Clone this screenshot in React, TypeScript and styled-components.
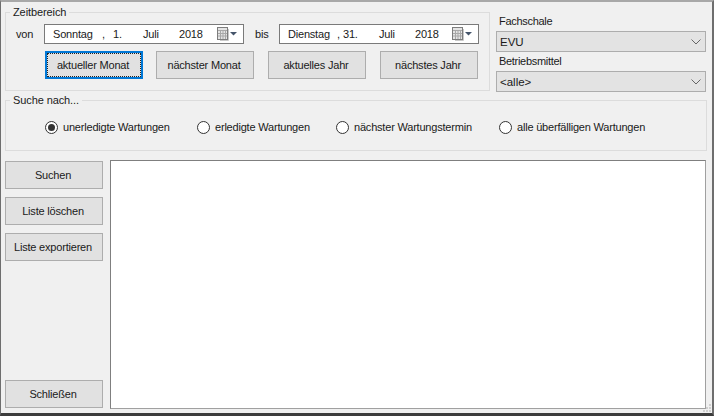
import React from "react";
import styled, { createGlobalStyle } from "styled-components";

const GlobalStyle = createGlobalStyle`
  html, body {
    margin: 0;
    padding: 0;
    background: #f0f0f0;
  }
`;

const Window = styled.div`
  box-sizing: border-box;
  position: relative;
  width: 714px;
  height: 416px;
  overflow: hidden;
  background: #f0f0f0;
  border-top: 2px solid #a8a8a8;
  border-left: 1px solid #6e6e6e;
  border-right: 2px solid #6e6e6e;
  border-bottom: 3px solid #3c3c3c;
  padding: 4px 6px 4px 4px;
  display: flex;
  flex-direction: column;
  font-family: "Liberation Sans", Arial, sans-serif;
  font-size: 11px;
  letter-spacing: -0.2px;
  color: #1a1a1a;
`;

const TopRow = styled.div`
  display: flex;
  align-items: flex-start;
  height: 85px;
`;

const Group = styled.fieldset<{ $h: number }>`
  box-sizing: border-box;
  margin: 0;
  border: 1px solid #dcdcdc;
  padding: 0;
  min-width: 0;
  height: ${(p) => p.$h}px;
  display: flex;
  flex-direction: column;
`;

const GroupTitle = styled.legend`
  margin-left: 4px;
  padding: 0 3px;
  font-size: 11px;
  line-height: 13px;
  letter-spacing: -0.1px;
`;

const RangeGroup = styled(Group)`
  width: 485px;
`;

const DateRow = styled.div`
  display: flex;
  align-items: center;
  margin-top: 5px;
  padding-left: 10px;
  height: 20px;
`;

const DateLabel = styled.span<{ $w: number; $indent?: number }>`
  box-sizing: border-box;
  width: ${(p) => p.$w}px;
  padding-left: ${(p) => p.$indent ?? 0}px;
`;

const DatePicker = styled.div`
  box-sizing: border-box;
  width: 200px;
  height: 20px;
  border: 1px solid #7a7a7a;
  background: #fff;
  display: flex;
  align-items: center;
  padding-left: 8px;
`;

const DatePart = styled.span<{ $w: number }>`
  width: ${(p) => p.$w}px;
  white-space: pre;
`;

const CalendarButton = styled.span`
  margin-left: auto;
  margin-right: 6px;
  display: flex;
`;

const ButtonRow = styled.div`
  display: flex;
  gap: 14px;
  margin-top: 7px;
  padding-left: 39px;
`;

const PushButton = styled.button<{ $focused?: boolean }>`
  box-sizing: border-box;
  width: 98px;
  height: 28px;
  padding: 0 2px 0 0;
  margin: 0;
  background: #e1e1e1;
  border: 1px solid #adadad;
  color: #1a1a1a;
  font: inherit;
  letter-spacing: inherit;
  ${(p) =>
    p.$focused
      ? `
    border: 2px solid #0078d7;
    outline: 1px dotted #222;
    outline-offset: -3px;
    margin-right: -1px;
  `
      : ""}
`;

const SideColumn = styled.div`
  width: 210px;
  margin-left: 6px;
  margin-top: 9px;
  display: flex;
  flex-direction: column;
`;

const FieldLabel = styled.label`
  box-sizing: border-box;
  line-height: 13px;
  height: 16px;
  padding-left: 3px;
  letter-spacing: -0.3px;
`;

const Combo = styled.div`
  box-sizing: border-box;
  height: 21px;
  margin-bottom: 3px;
  background: #e3e3e3;
  border: 1px solid #adadad;
  display: flex;
  align-items: center;
  justify-content: space-between;
  padding: 0 4px 0 3px;
  font-size: 11.5px;
  letter-spacing: 0;
`;

const SearchGroup = styled(Group)`
  margin-top: 3px;
  width: 702px;
`;

const RadioRow = styled.div`
  display: flex;
  align-items: center;
  height: 14px;
  margin-top: 13px;
  padding-left: 39px;
`;

const RadioOption = styled.div<{ $w: number }>`
  display: flex;
  align-items: center;
  gap: 5px;
  width: ${(p) => p.$w}px;
`;

const RadioDot = styled.span<{ $on?: boolean }>`
  box-sizing: border-box;
  width: 13px;
  height: 13px;
  border-radius: 50%;
  border: 1px solid #333;
  background: #fff;
  display: flex;
  align-items: center;
  justify-content: center;
  &::after {
    content: "";
    width: 7px;
    height: 7px;
    border-radius: 50%;
    background: ${(p) => (p.$on ? "#333" : "transparent")};
  }
`;

const BottomRow = styled.div`
  flex: 1;
  display: flex;
  gap: 7px;
  margin-top: 9px;
  min-height: 0;
`;

const ButtonColumn = styled.div`
  width: 98px;
  display: flex;
  flex-direction: column;
  gap: 8px;
  padding: 1px 0;
`;

const CloseButton = styled(PushButton)`
  margin-top: auto;
`;

const ResultList = styled.div`
  box-sizing: border-box;
  flex: 1;
  background: #fff;
  border: 1px solid #7f7f7f;
  border-right-color: #a0a0a0;
  border-bottom-color: #a0a0a0;
`;

const SizeGrip = styled.svg`
  position: absolute;
  right: 0;
  bottom: 0;
`;

const CalendarIcon = () => (
  <svg width="20" height="14" viewBox="0 0 20 14">
    <rect x="0.5" y="0.5" width="10" height="12" fill="#e4e4e4" stroke="#7d7d7d" />
    <path d="M1 3.5H10M3.5 4V12M6 4V12M8.5 4V12M1 6.5H10M1 9H10" stroke="#a8a8a8" fill="none" />
    <path d="M11.5 2V13.5H3" stroke="#c8c8c8" fill="none" />
    <path d="M13 5H20L16.5 8.5Z" fill="#44546a" />
  </svg>
);

const ChevronIcon = () => (
  <svg width="10" height="6" viewBox="0 0 10 6">
    <path d="M0.5 0.5L5 5L9.5 0.5" stroke="#666" fill="none" />
  </svg>
);

function DateField({ day, date, commaW, dateW }: { day: string; date: string; commaW: number; dateW: number }) {
  return (
    <DatePicker>
      <DatePart $w={49}>{day}</DatePart>
      <DatePart $w={commaW}>,</DatePart>
      <DatePart $w={dateW}>{date}</DatePart>
      <DatePart $w={36}>Juli</DatePart>
      <DatePart $w={30}>2018</DatePart>
      <CalendarButton>
        <CalendarIcon />
      </CalendarButton>
    </DatePicker>
  );
}

const options = [
  { label: "unerledigte Wartungen", w: 152, on: true },
  { label: "erledigte Wartungen", w: 139 },
  { label: "nächster Wartungstermin", w: 163 },
  { label: "alle überfälligen Wartungen", w: 160 },
];

export default function App() {
  return (
    <>
      <GlobalStyle />
      <Window>
        <TopRow>
          <RangeGroup $h={85}>
            <GroupTitle>Zeitbereich</GroupTitle>
            <DateRow>
              <DateLabel $w={28}>von</DateLabel>
              <DateField day="Sonntag" date="1." commaW={11} dateW={30} />
              <DateLabel $w={35} $indent={11}>
                bis
              </DateLabel>
              <DateField day="Dienstag" date="31." commaW={6} dateW={36} />
            </DateRow>
            <ButtonRow>
              <PushButton $focused>aktueller Monat</PushButton>
              <PushButton>nächster Monat</PushButton>
              <PushButton>aktuelles Jahr</PushButton>
              <PushButton>nächstes Jahr</PushButton>
            </ButtonRow>
          </RangeGroup>
          <SideColumn>
            <FieldLabel>Fachschale</FieldLabel>
            <Combo>
              EVU
              <ChevronIcon />
            </Combo>
            <FieldLabel>Betriebsmittel</FieldLabel>
            <Combo>
              {"<alle>"}
              <ChevronIcon />
            </Combo>
          </SideColumn>
        </TopRow>
        <SearchGroup $h={57}>
          <GroupTitle>Suche nach...</GroupTitle>
          <RadioRow>
            {options.map((o) => (
              <RadioOption key={o.label} $w={o.w}>
                <RadioDot $on={o.on} />
                {o.label}
              </RadioOption>
            ))}
          </RadioRow>
        </SearchGroup>
        <BottomRow>
          <ButtonColumn>
            <PushButton>Suchen</PushButton>
            <PushButton>Liste löschen</PushButton>
            <PushButton>Liste exportieren</PushButton>
            <CloseButton>Schließen</CloseButton>
          </ButtonColumn>
          <ResultList />
        </BottomRow>
        <SizeGrip width="11" height="11" viewBox="0 0 11 11">
          <path d="M8 2h2v2H8zM5 5h2v2H5zM8 5h2v2H8zM2 8h2v2H2zM5 8h2v2H5zM8 8h2v2H8z" fill="#cfcfcf" />
        </SizeGrip>
      </Window>
    </>
  );
}
